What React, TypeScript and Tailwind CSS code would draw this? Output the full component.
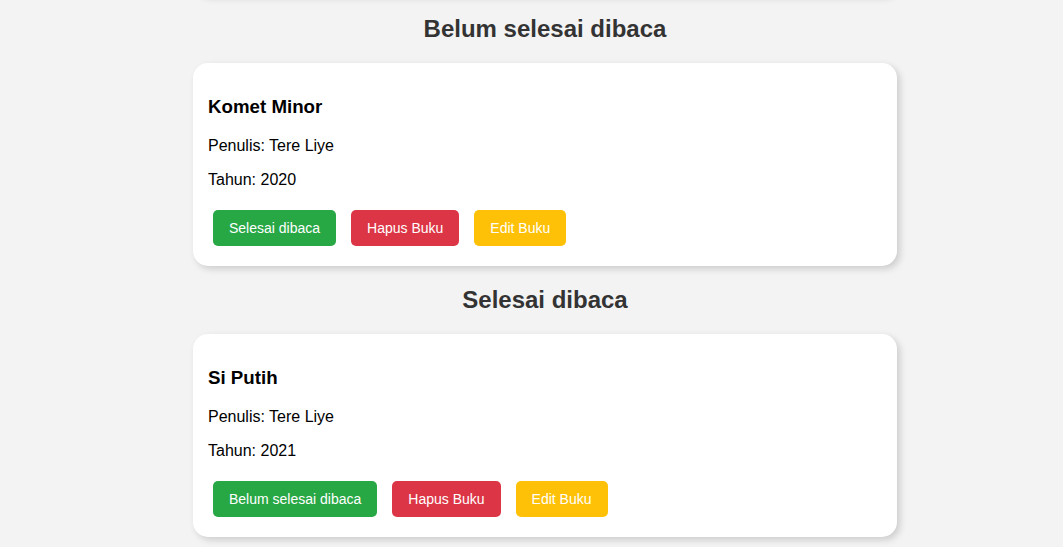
import React from 'react';

type Book = { title: string; author: string; year: number; done: boolean };

const books: Book[] = [
  { title: 'Komet Minor', author: 'Tere Liye', year: 2020, done: false },
  { title: 'Si Putih', author: 'Tere Liye', year: 2021, done: true },
];

const BookCard: React.FC<{ book: Book }> = ({ book }) => (
  <div className="w-[704px] bg-white rounded-[15px] shadow-[3px_3px_7px_rgba(0,0,0,0.16)] px-[15px] pt-[33px] pb-[20px] flex flex-col">
    <h3 className="text-[18.72px] leading-[22px] font-bold text-black">{book.title}</h3>
    <p className="mt-[19px] text-[16px] leading-[18px] text-black">Penulis: {book.author}</p>
    <p className="mt-[16px] text-[16px] leading-[18px] text-black">Tahun: {book.year}</p>
    <div className="mt-[21px] ml-[5px] flex gap-[15px]">
      <button className="h-[36px] px-[16px] rounded-[5px] bg-[#28a745] text-white text-[14px]">
        {book.done ? 'Belum selesai dibaca' : 'Selesai dibaca'}
      </button>
      <button className="h-[36px] px-[16px] rounded-[5px] bg-[#dc3545] text-white text-[14px]">
        Hapus Buku
      </button>
      <button className="h-[36px] px-[16px] rounded-[5px] bg-[#ffc107] text-white text-[14px]">
        Edit Buku
      </button>
    </div>
  </div>
);

const Section: React.FC<{ heading: string; items: Book[] }> = ({ heading, items }) => (
  <section className="flex flex-col items-center">
    <h2 className="mt-[20px] mb-[20px] text-[24px] leading-[28px] font-bold text-[#333]">{heading}</h2>
    {items.map((b) => (
      <BookCard key={b.title} book={b} />
    ))}
  </section>
);

export default function App() {
  return (
    <div
      className="min-h-screen bg-[#f3f3f3] pl-[27px] flex flex-col items-center overflow-hidden"
      style={{ fontFamily: '"Liberation Sans", Arial, sans-serif' }}
    >
      <div className="w-[704px] h-[100px] -mt-[105px] bg-white rounded-[15px] shadow-[3px_3px_7px_rgba(0,0,0,0.16)]" />
      <Section heading="Belum selesai dibaca" items={books.filter((b) => !b.done)} />
      <Section heading="Selesai dibaca" items={books.filter((b) => b.done)} />
    </div>
  );
}
